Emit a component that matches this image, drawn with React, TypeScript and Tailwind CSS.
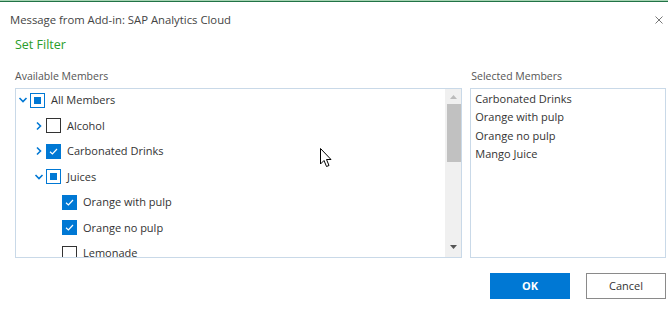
import React from "react";

const F = "font-['Open_Sans',sans-serif]";

function Chevron({ open }: { open: boolean }) {
  return (
    <svg width="10" height="10" viewBox="0 0 10 10" className="shrink-0">
      {open ? (
        <path d="M1.5 3 L5 6.5 L8.5 3" fill="none" stroke="#0078d4" strokeWidth="1.6" />
      ) : (
        <path d="M3 1.5 L6.5 5 L3 8.5" fill="none" stroke="#0078d4" strokeWidth="1.6" />
      )}
    </svg>
  );
}

type State = "checked" | "unchecked" | "partial";

function Box({ state }: { state: State }) {
  if (state === "checked")
    return (
      <div className="w-[15px] h-[15px] bg-[#0078d4] flex items-center justify-center shrink-0">
        <svg width="11" height="11" viewBox="0 0 11 11">
          <path d="M2 5.8 L4.4 8 L9 3" fill="none" stroke="#fff" strokeWidth="1.2" />
        </svg>
      </div>
    );
  if (state === "partial")
    return (
      <div className="w-[15px] h-[15px] border border-[#0078d4] flex items-center justify-center shrink-0">
        <div className="w-[7px] h-[7px] bg-[#0078d4]" />
      </div>
    );
  return <div className="w-[15px] h-[15px] border border-[#333] bg-white shrink-0" />;
}

const rows: { level: number; chev: "open" | "closed" | null; state: State; label: string }[] = [
  { level: 0, chev: "open", state: "partial", label: "All Members" },
  { level: 1, chev: "closed", state: "unchecked", label: "Alcohol" },
  { level: 1, chev: "closed", state: "checked", label: "Carbonated Drinks" },
  { level: 1, chev: "open", state: "partial", label: "Juices" },
  { level: 2, chev: null, state: "checked", label: "Orange with pulp" },
  { level: 2, chev: null, state: "checked", label: "Orange no pulp" },
  { level: 2, chev: null, state: "unchecked", label: "Lemonade" },
];

export default function App() {
  return (
    <div className={`w-[668px] h-[312px] bg-white relative overflow-hidden ${F}`}>
      <div className="h-px bg-[#a8d4b4]" />
      <div className="h-px bg-[#217346]" />
      <div className="flex items-center justify-between pl-[10px] pr-[5px] pt-[10px]">
        <span className="text-[11.3px] leading-[16px] text-[#444]">Message from Add-in: SAP Analytics Cloud</span>
        <svg width="8" height="8" viewBox="0 0 8 8">
          <path d="M0.5 0.5 L7.5 7.5 M7.5 0.5 L0.5 7.5" stroke="#777" strokeWidth="1" />
        </svg>
      </div>
      <div className="pl-[15px] mt-[8px] text-[12.5px] leading-[18px] text-[#2a9d2a]">Set Filter</div>
      <div className="flex pl-[15px] pr-[2px] mt-[15px] gap-[8px]">
        <div className="flex flex-col w-[448px]">
          <div className="text-[10.5px] leading-[14px] text-[#555] mb-[5px]">Available Members</div>
          <div className="h-[170px] border border-[#c9d9e8] flex overflow-hidden">
            <div className="flex-1 overflow-hidden -mt-[1.5px]">
              {rows.map((r, i) => (
                <div
                  key={i}
                  className={`h-[25.5px] flex items-center ${r.level === 0 ? "pl-0" : r.level === 1 ? "pl-[16px]" : "pl-[32px]"}`}
                >
                  <div className="w-[13px] flex items-center justify-center">
                    {r.chev && <Chevron open={r.chev === "open"} />}
                  </div>
                  <div className="ml-px">
                    <Box state={r.state} />
                  </div>
                  <span className="ml-[6px] text-[11px] text-[#333]">{r.label}</span>
                </div>
              ))}
            </div>
            <div className="w-[17px] bg-[#f0f0f0] flex flex-col items-center -mt-px -mr-px">
              <svg width="9" height="6" viewBox="0 0 9 6" className="mt-[6px]">
                <path d="M4.5 1 L8 5 L1 5 Z" fill="#bbb" />
              </svg>
              <div className="w-[14px] h-[58px] bg-[#c1c1c1] mt-[4px]" />
              <div className="flex-1" />
              <svg width="9" height="6" viewBox="0 0 9 6" className="mb-[7px]">
                <path d="M4.5 5 L8 1 L1 1 Z" fill="#555" />
              </svg>
            </div>
          </div>
        </div>
        <div className="flex flex-col w-[196px]">
          <div className="text-[10.5px] leading-[14px] text-[#555] mb-[5px] pl-px">Selected Members</div>
          <div className="h-[170px] border border-[#c9d9e8] pt-[1px] pl-[4px]">
            {["Carbonated Drinks", "Orange with pulp", "Orange no pulp", "Mango Juice"].map((t) => (
              <div key={t} className="text-[11px] leading-[18.3px] text-[#333]">{t}</div>
            ))}
          </div>
        </div>
      </div>
      <div className="flex justify-end gap-[16px] pr-[2px] mt-[15px]">
        <button className="w-[80px] h-[26px] bg-[#0078d4] text-white text-[11px] font-bold">OK</button>
        <button className="w-[80px] h-[26px] border border-[#8a8a8a] bg-white text-[#333] text-[11px]">Cancel</button>
      </div>
      <svg width="14" height="21" viewBox="0 0 14 21" className="absolute left-[320px] top-[148px]">
        <path d="M0.5 0.5 L0.5 16 L4 12.5 L6.5 18.5 L9 17.5 L6.5 11.5 L11 11.5 Z" fill="#fff" stroke="#000" strokeWidth="1" />
      </svg>
    </div>
  );
}
